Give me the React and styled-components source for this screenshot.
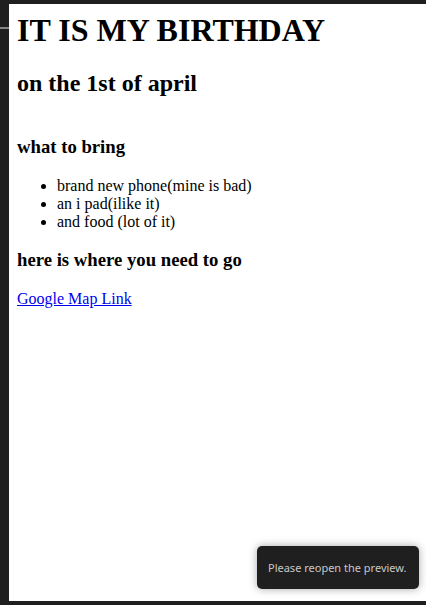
import React from "react";
import styled, { createGlobalStyle } from "styled-components";

const GlobalStyle = createGlobalStyle`
  html, body {
    margin: 0;
    padding: 0;
    background: #1f1f1f;
  }
`;

const Frame = styled.div`
  display: grid;
  grid-template-columns: 9px 1fr;
  grid-template-rows: 4px 1fr 4px;
  width: 100vw;
  height: 100vh;
  background: #1f1f1f;
  position: relative;
  overflow: hidden;
`;

const Gutter = styled.div`
  grid-column: 1;
  grid-row: 1 / 4;
  padding-top: 27px;
`;

const GutterLine = styled.div`
  height: 2px;
  background: #868686;
`;

const Page = styled.div`
  grid-column: 2;
  grid-row: 2;
  background: #fff;
  padding: 8px;
  font-family: "Liberation Serif", "Times New Roman", serif;
  color: #000;
  overflow: hidden;
`;

const Title = styled.h1`
  font-size: 32px;
  font-weight: bold;
  margin: 0 0 21px;
`;

const Subtitle = styled.h2`
  font-size: 24px;
  font-weight: bold;
  margin: 0 0 ${(p) => p.$gap || 20}px;
`;

const Section = styled.h3`
  font-size: 18.72px;
  font-weight: bold;
  margin: 18.72px 0;
`;

const List = styled.ul`
  font-size: 16px;
  margin: 16px 0 17px;
  padding-left: 40px;
`;

const Item = styled.li`
  line-height: normal;
`;

const Para = styled.p`
  font-size: 16px;
  margin: 16px 0;
`;

const MapLink = styled.a`
  color: #0000ee;
  text-decoration: underline;
`;

const Toast = styled.div`
  position: absolute;
  right: 7px;
  bottom: 16px;
  width: 162px;
  height: 43px;
  box-sizing: border-box;
  display: flex;
  align-items: center;
  padding: 0 11px;
  background: #1f1f1f;
  border-radius: 5px;
  box-shadow: 0 0 8px rgba(0, 0, 0, 0.35);
  color: #c8c8c8;
  font-family: "Noto Sans", "Open Sans", sans-serif;
  font-size: 11px;
  white-space: nowrap;
`;

const items = [
  "brand new phone(mine is bad)",
  "an i pad(ilike it)",
  "and food (lot of it)",
];

export default function App() {
  return (
    <>
      <GlobalStyle />
      <Frame>
        <Gutter>
          <GutterLine />
        </Gutter>
        <Page>
          <Title>IT IS MY BIRTHDAY</Title>
          <Subtitle $gap={39}>on the 1st of april</Subtitle>
          <Section>what to bring</Section>
          <List>
            {items.map((item) => (
              <Item key={item}>{item}</Item>
            ))}
          </List>
          <Section>here is where you need to go</Section>
          <Para>
            <MapLink href="#">Google Map Link</MapLink>
          </Para>
        </Page>
        <Toast>Please reopen the preview.</Toast>
      </Frame>
    </>
  );
}
